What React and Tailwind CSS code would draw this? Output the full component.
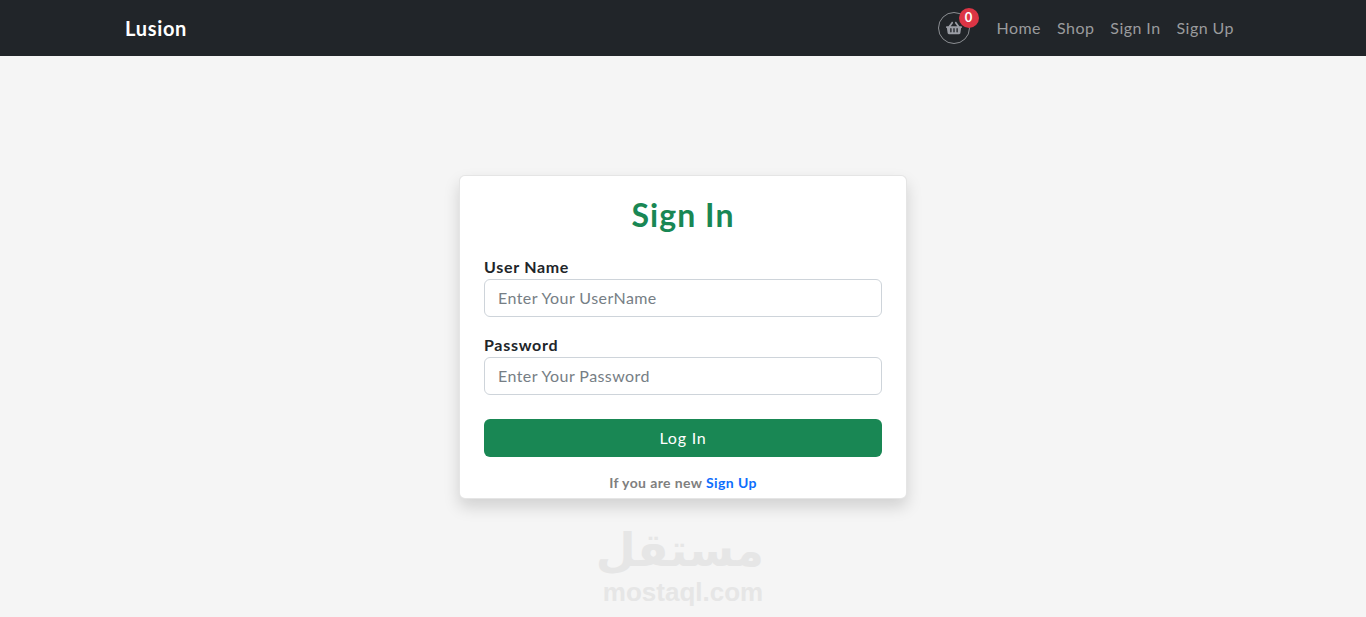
import React from 'react';
import { FaShoppingBasket } from 'react-icons/fa';

const font = { fontFamily: '"Lato", "Noto Sans", sans-serif' };

function Field({ label, placeholder, type }) {
  return (
    <div className="mb-4">
      <label className="block h-6 text-[16px] leading-6 font-bold tracking-[0.7px] text-[#212529]">{label}</label>
      <input
        type={type}
        placeholder={placeholder}
        className="block w-full h-[38px] px-[13px] pb-0.5 bg-white border border-[#ced4da] rounded-md text-[16px] tracking-[0.42px] placeholder:text-[#767e85] outline-none"
      />
    </div>
  );
}

export default function App() {
  return (
    <div className="relative min-h-screen bg-[#f5f5f5]" style={font}>
      <nav className="h-14 bg-[#212529]">
        <div className="max-w-[1140px] mx-auto h-full px-3 flex items-center justify-between">
          <a className="text-[20px] font-bold tracking-[0.7px] text-white">Lusion</a>
          <div className="flex items-center">
            <div className="relative w-8 h-8 mr-[27px] rounded-full border border-[#8b8e92] flex items-center justify-center text-[#9a9da5]">
              <FaShoppingBasket size={16} />
              <span className="absolute -top-[5px] -right-[10px] w-5 h-5 rounded-full bg-[#dc3545] text-white text-[13px] font-bold flex items-center justify-center">0</span>
            </div>
            <div className="flex items-center gap-4 pr-[7px] text-[16px] tracking-[0.45px] text-[#9a9b9d]">
              <a>Home</a>
              <a>Shop</a>
              <a>Sign In</a>
              <a>Sign Up</a>
            </div>
          </div>
        </div>
      </nav>

      <main className="flex justify-center pt-[119px]">
        <form className="w-[448px] h-[324px] px-6 pt-4 bg-white border border-black/10 rounded-md shadow-[0_8px_16px_rgba(0,0,0,0.15)]">
          <h1 className="mb-[17px] text-center text-[32px] leading-[46px] font-bold tracking-[1.05px] text-[#198754]">Sign In</h1>
          <Field label="User Name" placeholder="Enter Your UserName" type="text" />
          <Field label="Password" placeholder="Enter Your Password" type="password" />
          <button type="button" className="block w-full h-[38px] mt-6 bg-[#198754] rounded-md text-white text-[16px] tracking-[0.8px]">Log In</button>
          <p className="mt-[15px] text-center text-[14px] leading-[21px] font-bold tracking-[0.4px] text-[#7f7f7f]">
            If you are new <a className="text-[#0d6efd]">Sign Up</a>
          </p>
        </form>
      </main>

      {/* watermark */}
      <div className="absolute left-[602px] top-[524px] w-[162px] text-center text-[#e6e6e6] font-bold pointer-events-none">
        <div dir="rtl" className="h-14 text-[46px] leading-[52px] whitespace-nowrap" style={{ fontFamily: '"DejaVu Sans", sans-serif' }}>مستقل</div>
        <div className="text-[26px] leading-6 whitespace-nowrap" style={{ fontFamily: '"Liberation Sans", sans-serif' }}>mostaql.com</div>
      </div>
    </div>
  );
}
